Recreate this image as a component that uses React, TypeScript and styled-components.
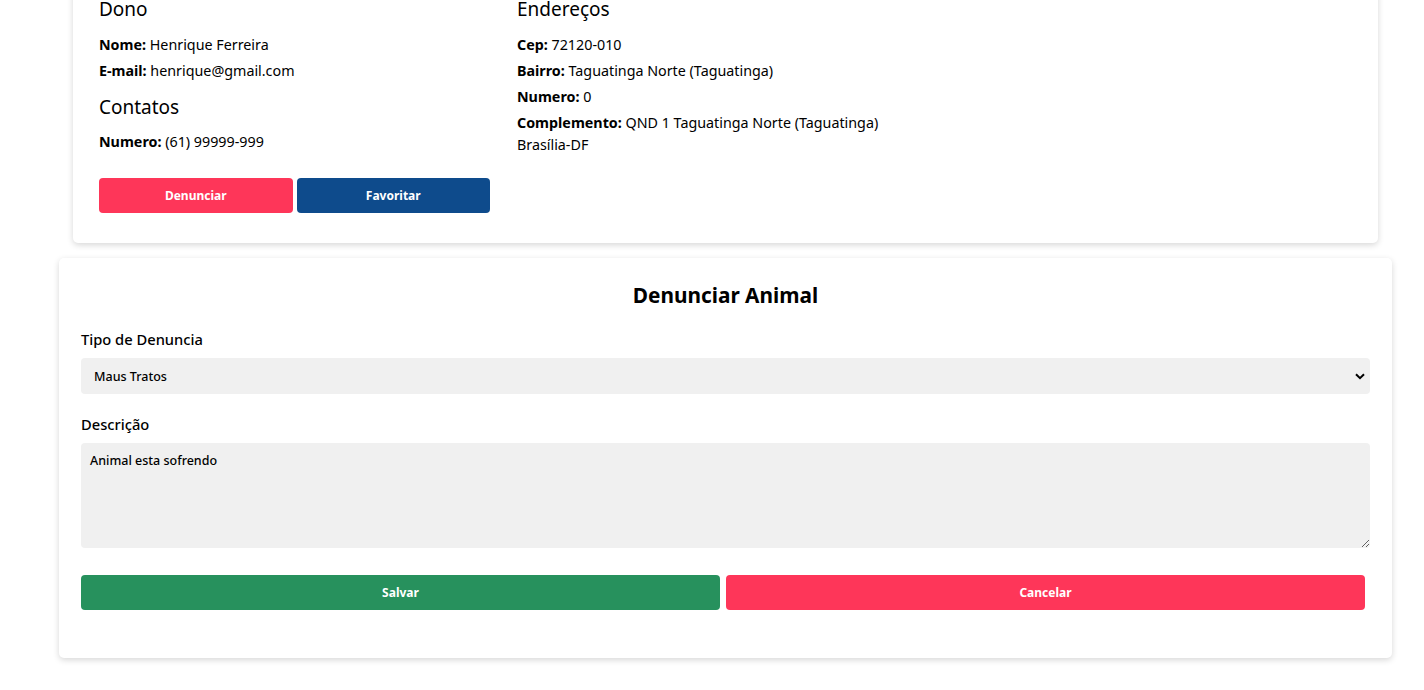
import React from "react";
import styled, { createGlobalStyle } from "styled-components";

const GlobalStyle = createGlobalStyle`
  html, body { margin: 0; padding: 0; background: #ffffff; }
  body { font-family: "Noto Sans", "Open Sans", sans-serif; color: #000; }
  * { box-sizing: border-box; }
`;

const Page = styled.div`
  display: flex;
  flex-direction: column;
  margin-top: -22px;
  padding-bottom: 40px;
`;

const InfoCard = styled.section`
  margin-left: 73px;
  width: 1305px;
  background: #fff;
  border-radius: 5px;
  box-shadow: 0 2px 6px rgba(0, 0, 0, 0.16);
  padding: 19px 26px 30px;
`;

const Columns = styled.div`
  display: flex;
  gap: 27px;
`;

const Column = styled.div`
  width: 391px;
  display: flex;
  flex-direction: column;
`;

const SectionTitle = styled.h3<{ $gap?: number }>`
  margin: ${(p) => p.$gap ?? 0}px 0 ${(p) => (p.$gap ? 12 : 13)}px;
  font-size: 19px;
  line-height: 24px;
  font-weight: 400;
`;

const Field = styled.p`
  margin: 0 0 4px;
  font-size: 14.3px;
  line-height: 22px;
`;

const ButtonRow = styled.div<{ $gap: number }>`
  display: flex;
  gap: ${(p) => p.$gap}px;
`;

const ActionButton = styled.button<{ $bg: string; $h: number }>`
  flex: 1;
  height: ${(p) => p.$h}px;
  border: none;
  border-radius: 4px;
  background: ${(p) => p.$bg};
  color: #fff;
  font-family: inherit;
  font-size: 12px;
  font-weight: 700;
  cursor: pointer;
`;

const OwnerButtons = styled(ButtonRow)`
  margin-top: 21px;
`;

const FormCard = styled.section`
  margin: 15px 0 0 59px;
  width: 1333px;
  background: #fff;
  border-radius: 5px;
  box-shadow: 0 2px 6px rgba(0, 0, 0, 0.16);
  padding: 23px 22px 48px;
  display: flex;
  flex-direction: column;
`;

const FormTitle = styled.h2`
  margin: 0 0 20px;
  text-align: center;
  font-size: 20.8px;
  line-height: 28px;
  font-weight: 700;
`;

const Label = styled.label`
  font-size: 14.7px;
  font-weight: 500;
  line-height: 20px;
  margin-bottom: 9px;
`;

const SelectWrap = styled.div`
  position: relative;
  margin-bottom: 20px;
`;

const Select = styled.select`
  width: 100%;
  height: 36px;
  appearance: none;
  border: none;
  border-radius: 4px;
  background: #f0f0f0;
  padding: 0 13px;
  font-family: inherit;
  font-size: 12.5px;
  font-weight: 500;
  color: #000;
  outline: none;
`;

const Chevron = styled.svg`
  position: absolute;
  right: 5px;
  top: 15px;
  pointer-events: none;
`;

const TextArea = styled.textarea`
  width: 100%;
  height: 105px;
  border: none;
  border-radius: 4px;
  background: #f0f0f0;
  padding: 9px 9px;
  font-family: inherit;
  font-size: 12.5px;
  font-weight: 500;
  color: #000;
  outline: none;
  resize: vertical;
  display: block;
`;

const FormButtons = styled(ButtonRow)`
  margin-top: 27px;
  padding-right: 5px;
`;

export default function App() {
  return (
    <>
      <GlobalStyle />
      <Page>
        <InfoCard>
          <Columns>
            <Column>
              <SectionTitle>Dono</SectionTitle>
              <Field><b>Nome:</b> Henrique Ferreira</Field>
              <Field><b>E-mail:</b> henrique@gmail.com</Field>
              <SectionTitle $gap={9}>Contatos</SectionTitle>
              <Field><b>Numero:</b> (61) 99999-999</Field>
              <OwnerButtons $gap={4}>
                <ActionButton $bg="#fe3659" $h={35}>Denunciar</ActionButton>
                <ActionButton $bg="#0e4b8c" $h={35}>Favoritar</ActionButton>
              </OwnerButtons>
            </Column>
            <Column>
              <SectionTitle>Endereços</SectionTitle>
              <Field><b>Cep:</b> 72120-010</Field>
              <Field><b>Bairro:</b> Taguatinga Norte (Taguatinga)</Field>
              <Field><b>Numero:</b> 0</Field>
              <Field><b>Complemento:</b> QND 1 Taguatinga Norte (Taguatinga) Brasília-DF</Field>
            </Column>
          </Columns>
        </InfoCard>
        <FormCard>
          <FormTitle>Denunciar Animal</FormTitle>
          <Label>Tipo de Denuncia</Label>
          <SelectWrap>
            <Select defaultValue="maus">
              <option value="maus">Maus Tratos</option>
              <option value="abandono">Abandono</option>
            </Select>
            <Chevron width="10" height="7" viewBox="0 0 10 7">
              <path d="M1 1.2 L5 5.2 L9 1.2" fill="none" stroke="#000" strokeWidth="2" />
            </Chevron>
          </SelectWrap>
          <Label>Descrição</Label>
          <TextArea defaultValue="Animal esta sofrendo" />
          <FormButtons $gap={6}>
            <ActionButton $bg="#27915d" $h={35}>Salvar</ActionButton>
            <ActionButton $bg="#fe3659" $h={35}>Cancelar</ActionButton>
          </FormButtons>
        </FormCard>
      </Page>
    </>
  );
}
